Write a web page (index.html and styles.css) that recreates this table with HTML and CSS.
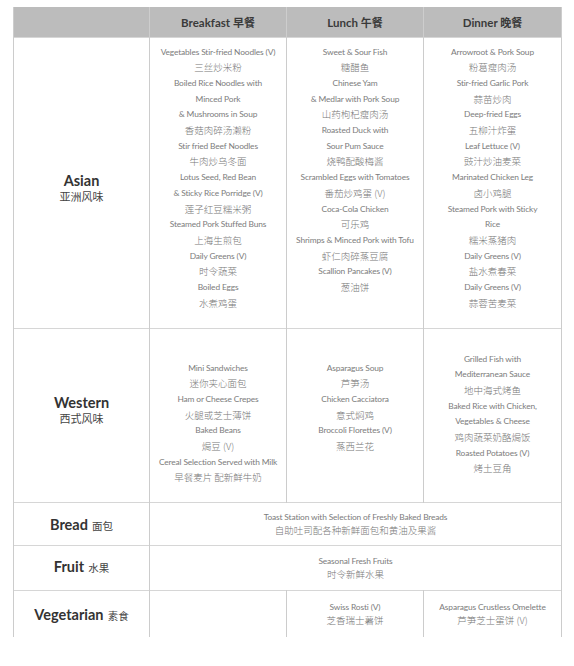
FILE: index.html
```html
<!DOCTYPE html>
<html>
<head>
<meta charset="utf-8">
<link rel="stylesheet" href="styles.css">
</head>
<body>
<table class="menu">
  <colgroup>
    <col class="c-label"><col class="c-meal"><col class="c-meal"><col class="c-meal2">
  </colgroup>
  <tr class="r-head">
    <th></th>
    <th>Breakfast <span class="zh">早餐</span></th>
    <th>Lunch <span class="zh">午餐</span></th>
    <th>Dinner <span class="zh">晚餐</span></th>
  </tr>
  <tr class="r-asian">
    <td class="label lift-down"><div class="en">Asian</div><div class="cn">亚洲风味</div></td>
    <td class="items top">
      <div>Vegetables Stir-fried Noodles (V)</div>
      <div class="z">三丝炒米粉</div>
      <div>Boiled Rice Noodles with</div>
      <div>Minced Pork</div>
      <div>&amp; Mushrooms in Soup</div>
      <div class="z">香菇肉碎汤濑粉</div>
      <div>Stir fried Beef Noodles</div>
      <div class="z">牛肉炒乌冬面</div>
      <div>Lotus Seed, Red Bean</div>
      <div>&amp; Sticky Rice Porridge (V)</div>
      <div class="z">莲子红豆糯米粥</div>
      <div>Steamed Pork Stuffed Buns</div>
      <div class="z">上海生煎包</div>
      <div>Daily Greens (V)</div>
      <div class="z">时令蔬菜</div>
      <div>Boiled Eggs</div>
      <div class="z">水煮鸡蛋</div>
    </td>
    <td class="items top">
      <div>Sweet &amp; Sour Fish</div>
      <div class="z">糖醋鱼</div>
      <div>Chinese Yam</div>
      <div>&amp; Medlar with Pork Soup</div>
      <div class="z">山药枸杞瘦肉汤</div>
      <div>Roasted Duck with</div>
      <div>Sour Pum Sauce</div>
      <div class="z">烧鸭配酸梅酱</div>
      <div>Scrambled Eggs with Tomatoes</div>
      <div class="z">番茄炒鸡蛋 (V)</div>
      <div>Coca-Cola Chicken</div>
      <div class="z">可乐鸡</div>
      <div>Shrimps &amp; Minced Pork with Tofu</div>
      <div class="z">虾仁肉碎蒸豆腐</div>
      <div>Scallion Pancakes (V)</div>
      <div class="z">葱油饼</div>
    </td>
    <td class="items top">
      <div>Arrowroot &amp; Pork Soup</div>
      <div class="z">粉葛瘦肉汤</div>
      <div>Stir-fried Garlic Pork</div>
      <div class="z">蒜苗炒肉</div>
      <div>Deep-fried Eggs</div>
      <div class="z">五柳汁炸蛋</div>
      <div>Leaf Lettuce (V)</div>
      <div class="z">豉汁炒油麦菜</div>
      <div>Marinated Chicken Leg</div>
      <div class="z">卤小鸡腿</div>
      <div>Steamed Pork with Sticky</div>
      <div>Rice</div>
      <div class="z">糯米蒸猪肉</div>
      <div>Daily Greens (V)</div>
      <div class="z">盐水煮春菜</div>
      <div>Daily Greens (V)</div>
      <div class="z">蒜蓉苦麦菜</div>
    </td>
  </tr>
  <tr class="r-western">
    <td class="label lift-up"><div class="en">Western</div><div class="cn">西式风味</div></td>
    <td class="items top w-low">
      <div>Mini Sandwiches</div>
      <div class="z">迷你夹心面包</div>
      <div>Ham or Cheese Crepes</div>
      <div class="z">火腿或芝士薄饼</div>
      <div>Baked Beans</div>
      <div class="z">焗豆 (V)</div>
      <div>Cereal Selection Served with Milk</div>
      <div class="z">早餐麦片 配新鲜牛奶</div>
    </td>
    <td class="items top w-low">
      <div>Asparagus Soup</div>
      <div class="z">芦笋汤</div>
      <div>Chicken Cacciatora</div>
      <div class="z">意式焖鸡</div>
      <div>Broccoli Florettes (V)</div>
      <div class="z">蒸西兰花</div>
    </td>
    <td class="items top w-high">
      <div>Grilled Fish with</div>
      <div>Mediterranean Sauce</div>
      <div class="z">地中海式烤鱼</div>
      <div>Baked Rice with Chicken,</div>
      <div>Vegetables &amp; Cheese</div>
      <div class="z">鸡肉蔬菜奶酪焗饭</div>
      <div>Roasted Potatoes (V)</div>
      <div class="z">烤土豆角</div>
    </td>
  </tr>
  <tr class="r-bread">
    <td class="label"><span class="en">Bread</span> <span class="cn-s">面包</span></td>
    <td class="items short" colspan="3">
      <div>Toast Station with Selection of Freshly Baked Breads</div>
      <div class="z">自助吐司配各种新鲜面包和黄油及果酱</div>
    </td>
  </tr>
  <tr class="r-fruit">
    <td class="label lift-up-s"><span class="en">Fruit</span> <span class="cn-s">水果</span></td>
    <td class="items short" colspan="3">
      <div>Seasonal Fresh Fruits</div>
      <div class="z">时令新鲜水果</div>
    </td>
  </tr>
  <tr class="r-veg">
    <td class="label"><span class="en">Vegetarian</span> <span class="cn-s">素食</span></td>
    <td class="items short"></td>
    <td class="items short">
      <div>Swiss Rosti (V)</div>
      <div class="z">芝香瑞士薯饼</div>
    </td>
    <td class="items short">
      <div>Asparagus Crustless Omelette</div>
      <div class="z">芦笋芝士蛋饼 (V)</div>
    </td>
  </tr>
</table>
</body>
</html>
```

FILE: styles.css
```css
html, body {
  margin: 0;
  padding: 0;
  background: #ffffff;
}
body {
  padding: 7px 0 0 13px;
  font-family: Lato, "Noto Sans CJK SC", sans-serif;
}
.menu {
  border-collapse: collapse;
  table-layout: fixed;
  width: 548px;
}
.c-label { width: 136px; }
.c-meal { width: 137px; }
.c-meal2 { width: 138px; }
.menu th, .menu td {
  padding: 0;
  border-left: 1px solid #cccccc;
  border-right: 1px solid #cccccc;
  text-align: center;
}
.menu tr + tr td {
  border-top: 1px solid #d6d6d6;
}
.r-head { height: 30px; }
.r-asian { height: 291px; }
.r-western { height: 174px; }
.r-bread { height: 43px; }
.r-fruit { height: 45px; }
.r-veg { height: 47px; }

.r-head th {
  background: #bcbcbc;
  font-size: 11.5px;
  font-weight: 700;
  color: #3a3a3a;
  vertical-align: middle;
  border-left-color: #cdcdcd;
  border-right-color: #cdcdcd;
}
.r-head .zh {
  font-size: 11px;
}

.label {
  vertical-align: middle;
  color: #333333;
}
.label .en {
  font-size: 14.5px;
  font-weight: 700;
  line-height: 17px;
}
.label .cn {
  font-family: "Noto Sans CJK SC", sans-serif;
  font-size: 11px;
  line-height: 14px;
  color: #444444;
}
.label .cn-s {
  font-family: "Noto Sans CJK SC", sans-serif;
  font-size: 10.5px;
  color: #444444;
}
.label.lift-down { padding-top: 9px; }
.label.lift-up { padding-bottom: 12px; }
.label.lift-up-s { padding-bottom: 4px; }
.items {
  font-size: 8.4px;
  font-weight: 400;
  color: #7c7c7c;
  line-height: 15.7px;
  letter-spacing: -0.15px;
}
.items .z {
  font-family: "Noto Sans CJK SC", sans-serif;
  font-size: 9.5px;
  font-weight: 300;
  color: #777777;
  letter-spacing: 0;
}
.items.top {
  vertical-align: top;
  padding-top: 7px;
}
.items.w-low { padding-top: 32px; }
.items.w-high { padding-top: 23px; }
.items.short {
  vertical-align: middle;
  line-height: 13px;
}
```
